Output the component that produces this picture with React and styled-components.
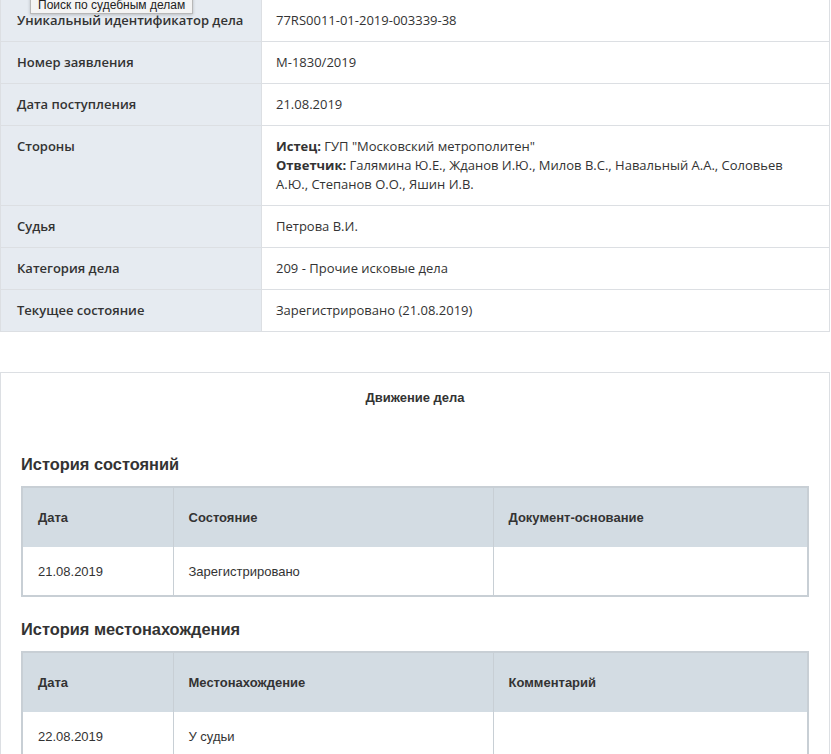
import React from "react";
import styled, { createGlobalStyle } from "styled-components";

const GlobalStyle = createGlobalStyle`
  body {
    margin: 0;
    background: #fff;
    color: #333;
  }
  * {
    box-sizing: border-box;
  }
`;

const Page = styled.div`
  position: relative;
  width: 831px;
  margin-top: -1px;
`;

const Tooltip = styled.div`
  position: absolute;
  top: -4px;
  left: 30px;
  padding: 2px 7px 1px;
  background: #f4f4f4;
  border: 1px solid #b8b8b8;
  box-shadow: 0 1px 3px rgba(0, 0, 0, 0.2);
  font-family: "Liberation Sans", Arial, sans-serif;
  font-size: 12px;
  color: #222;
  z-index: 2;
`;

const InfoTable = styled.table`
  width: 830px;
  border-collapse: collapse;
  font-family: "Open Sans", sans-serif;
  font-size: 13px;
  line-height: 19px;
  color: #333;
`;

const Label = styled.td`
  width: 261px;
  padding: 11px 15px 11px 16px;
  background: #e6ebf1;
  border: 1px solid #dcdfe3;
  font-weight: 600;
  vertical-align: top;
`;

const Value = styled.td`
  padding: 11px 15px 11px 14px;
  background: #fff;
  border: 1px solid #dcdfe3;
  vertical-align: top;
`;

const Panel = styled.section`
  width: 830px;
  margin-top: 40px;
  border: 1px solid #dcdfe3;
  border-bottom: none;
  padding: 0 20px 40px;
  font-family: "Liberation Sans", Arial, sans-serif;
  color: #333;
`;

const PanelTitle = styled.h3`
  margin: 0;
  padding: 17px 0 0;
  height: 59px;
  text-align: center;
  font-size: 13px;
  font-weight: bold;
  line-height: 16px;
`;

const SectionTitle = styled.h4`
  margin: 0;
  padding: 23px 0 12px;
  font-size: 16.4px;
  font-weight: bold;
  line-height: 19px;
  color: #333;
`;

const HistoryTable = styled.table`
  width: 788px;
  border-collapse: collapse;
  border: 2px solid #c8cfd5;
  font-size: 13px;
  table-layout: fixed;
`;

const HeadCell = styled.th`
  width: ${(p) => (p.$w ? `${p.$w}px` : "auto")};
  height: 60px;
  padding: 0 15px;
  background: #d3dce3;
  border-left: 1px solid #c8cfd5;
  text-align: left;
  font-weight: bold;
  color: #333;
`;

const Cell = styled.td`
  height: 49px;
  padding: 0 15px;
  background: #fff;
  border-left: 1px solid #c8cfd5;
  color: #333;
`;

const rows = [
  ["Уникальный идентификатор дела", "77RS0011-01-2019-003339-38"],
  ["Номер заявления", "М-1830/2019"],
  ["Дата поступления", "21.08.2019"],
  [
    "Стороны",
    <>
      <b>Истец:</b> ГУП "Московский метрополитен"
      <br />
      <b>Ответчик:</b> Галямина Ю.Е., Жданов И.Ю., Милов В.С., Навальный А.А., Соловьев А.Ю., Степанов О.О., Яшин И.В.
    </>,
  ],
  ["Судья", "Петрова В.И."],
  ["Категория дела", "209 - Прочие исковые дела"],
  ["Текущее состояние", "Зарегистрировано (21.08.2019)"],
];

const colWidths = [151, 320];

const History = ({ title, cols, data }) => (
  <>
    <SectionTitle>{title}</SectionTitle>
    <HistoryTable>
      <thead>
        <tr>
          {cols.map((c, i) => (
            <HeadCell key={c} $w={colWidths[i]}>
              {c}
            </HeadCell>
          ))}
        </tr>
      </thead>
      <tbody>
        {data.map((r, i) => (
          <tr key={i}>
            {r.map((v, j) => (
              <Cell key={j}>{v}</Cell>
            ))}
          </tr>
        ))}
      </tbody>
    </HistoryTable>
  </>
);

export default function App() {
  return (
    <Page>
      <GlobalStyle />
      <Tooltip>Поиск по судебным делам</Tooltip>
      <InfoTable>
        <tbody>
          {rows.map(([k, v]) => (
            <tr key={k}>
              <Label>{k}</Label>
              <Value>{v}</Value>
            </tr>
          ))}
        </tbody>
      </InfoTable>
      <Panel>
        <PanelTitle>Движение дела</PanelTitle>
        <History
          title="История состояний"
          cols={["Дата", "Состояние", "Документ-основание"]}
          data={[["21.08.2019", "Зарегистрировано", ""]]}
        />
        <History
          title="История местонахождения"
          cols={["Дата", "Местонахождение", "Комментарий"]}
          data={[["22.08.2019", "У судьи", ""]]}
        />
      </Panel>
    </Page>
  );
}
